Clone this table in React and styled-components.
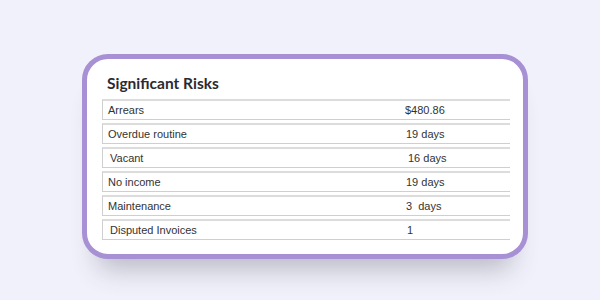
import React from "react";
import styled, { createGlobalStyle } from "styled-components";

const GlobalStyle = createGlobalStyle`
  html, body {
    margin: 0;
    padding: 0;
    background: #f1f1fb;
  }
  body {
    width: 600px;
    height: 300px;
    overflow: hidden;
  }
`;

const Page = styled.div`
  width: 600px;
  height: 300px;
  box-sizing: border-box;
  padding: 54px 0 0 82px;
`;

const Card = styled.div`
  width: 446px;
  height: 205px;
  box-sizing: border-box;
  border: 5px solid #a890d4;
  border-radius: 26px;
  background: #fff;
  padding: 14px 0 0 15px;
  box-shadow: 0 26px 26px -16px rgba(60, 60, 80, 0.3);
`;

const Title = styled.h2`
  margin: 0 0 6px 5px;
  font-family: Lato, "Open Sans", sans-serif;
  font-weight: 700;
  font-size: 15.5px;
  line-height: 20px;
  color: #2b2b30;
`;

const Rows = styled.div`
  display: flex;
  flex-direction: column;
  gap: 3px;
  width: 408px;
`;

const Row = styled.div`
  display: grid;
  grid-template-columns: 300px 1fr;
  align-items: center;
  height: 21px;
  box-sizing: border-box;
  border: 1px solid #cfcfcf;
  border-top: 2px solid #dcdcdc;
  border-right: none;
  font-family: "Liberation Sans", Arial, sans-serif;
  font-size: 11px;
  color: #333;
`;

const Label = styled.span`
  padding-left: ${p => p.$indent}px;
`;

const Value = styled.span`
  padding-left: ${p => p.$indent}px;
  white-space: pre;
`;

const risks = [
  { label: "Arrears", value: "$480.86", li: 5, vi: 2 },
  { label: "Overdue routine", value: "19 days", li: 5, vi: 3 },
  { label: "Vacant", value: "16 days", li: 7, vi: 5 },
  { label: "No income", value: "19 days", li: 5, vi: 3 },
  { label: "Maintenance", value: "3  days", li: 5, vi: 3 },
  { label: "Disputed Invoices", value: "1", li: 7, vi: 4 },
];

export default function App() {
  return (
    <Page>
      <GlobalStyle />
      <Card>
        <Title>Significant Risks</Title>
        <Rows>
          {risks.map(r => (
            <Row key={r.label}>
              <Label $indent={r.li}>{r.label}</Label>
              <Value $indent={r.vi}>{r.value}</Value>
            </Row>
          ))}
        </Rows>
      </Card>
    </Page>
  );
}
